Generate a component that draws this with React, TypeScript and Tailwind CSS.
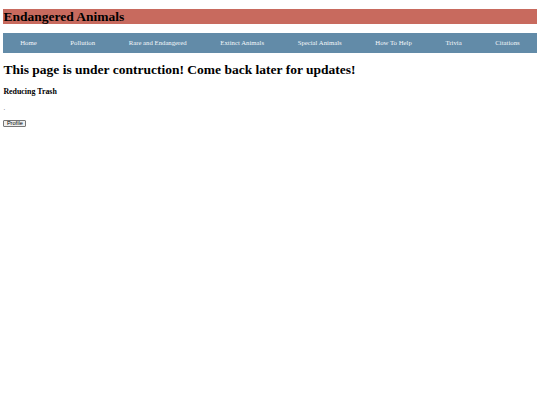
const navItems = [
  "Home",
  "Pollution",
  "Rare and Endangered",
  "Extinct Animals",
  "Special Animals",
  "How To Help",
  "Trivia",
  "Citations",
];

const App = () => {
  return (
    <div className="min-h-[405px] bg-white px-[3.4px] py-[9px] font-['Liberation_Serif',serif] text-black">
      <header className="bg-[#c86a5e]">
        <h1 className="text-[13.5px] leading-[15px] font-bold">Endangered Animals</h1>
      </header>

      <nav className="mt-[9px] flex h-[20px] items-center overflow-hidden bg-[#628ba8]">
        {navItems.map((item) => (
          <a
            key={item}
            href="#"
            className="shrink-0 whitespace-nowrap px-[16.8px] text-[6.75px] leading-[20px] text-[#f4f7fa]"
          >
            {item}
          </a>
        ))}
      </nav>

      <h1 className="mt-[9px] text-[13.5px] leading-[15.5px] font-bold">
        This page is under contruction! Come back later for updates!
      </h1>

      <h3 className="mt-[9px] text-[7.9px] leading-[9px] font-bold">Reducing Trash</h3>

      <p className="mt-[8px] h-[8px] text-[6.75px] leading-[8px] text-gray-500">.</p>

      <div className="mt-[8px] flex">
        <button className="h-[7.5px] border border-[#767676] bg-[#efefef] px-[2.5px] py-0 font-['Liberation_Sans',sans-serif] text-[5.6px] leading-[5.5px] rounded-[1px]">
          Profile
        </button>
      </div>
    </div>
  );
};

export default App;
